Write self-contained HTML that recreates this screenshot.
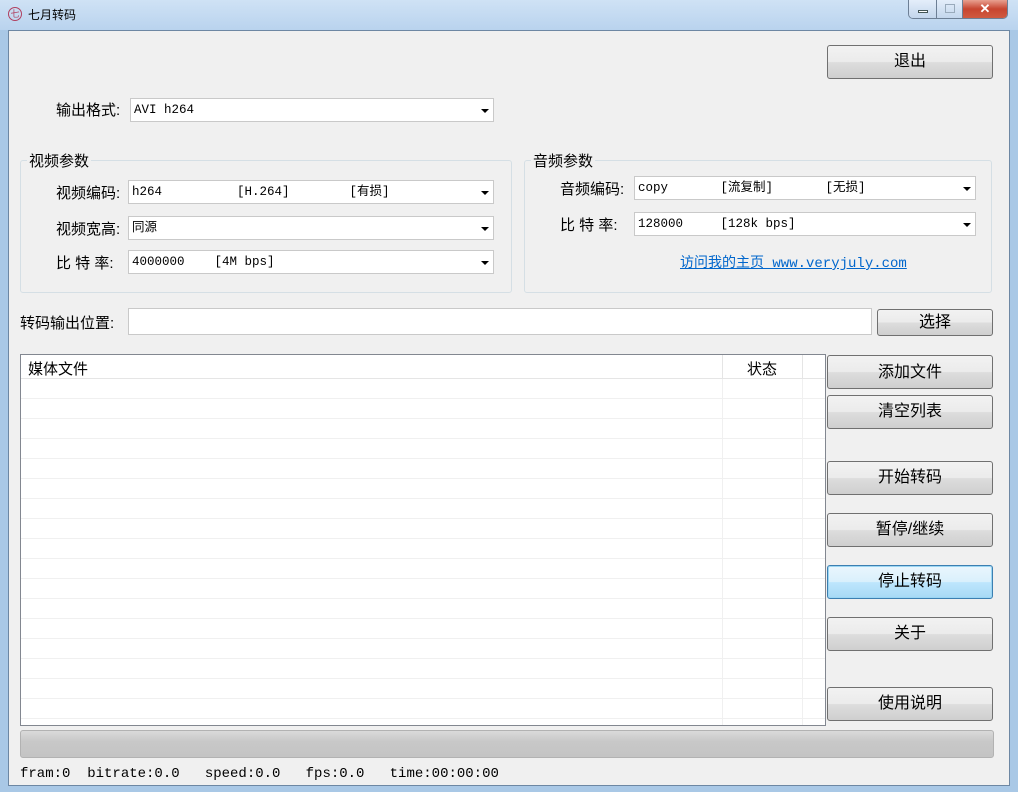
<!DOCTYPE html>
<html><head><meta charset="utf-8"><style>
*{margin:0;padding:0;box-sizing:border-box}
body{width:1018px;height:792px;overflow:hidden;background:#a9c8e6;font-family:"Liberation Sans","Noto Sans CJK SC",sans-serif;font-size:15px;color:#000;position:relative}
.abs{position:absolute}
#title{left:0;top:0;width:1018px;height:30px;background:linear-gradient(#cfe2f5,#b9d3ee)}
#client{left:8px;top:30px;width:1002px;height:756px;background:#f0f0f0;border:1px solid #6d87a3}
.lbl{position:absolute;font-size:15px;white-space:pre}
.cb{position:absolute;height:24px;background:#fff;border:1px solid #c9c9c9;font-family:"Liberation Mono","Noto Sans CJK SC",monospace;font-size:12.5px;line-height:22px;padding-left:3px;white-space:pre}
.cb:after{content:"";position:absolute;right:4px;top:10px;border-left:4px solid transparent;border-right:4px solid transparent;border-top:4px solid #000}
.btn{position:absolute;width:166px;border:1px solid #707070;border-radius:3px;background:linear-gradient(#f2f2f2 0%,#ebebeb 50%,#dddddd 51%,#cfcfcf 100%);text-align:center;font-size:16px}
.grp{position:absolute;border:1px solid #d5dfe5;border-radius:3px}
.gt{position:absolute;background:#f0f0f0;padding:0 2px;font-size:15px}
</style></head><body>
<div id="title" class="abs"></div>
<div class="abs" style="left:8px;top:7px;width:14px;height:14px;border:1px solid #b04060;border-radius:50%;font-size:9px;line-height:12px;text-align:center;color:#b04060">七</div>
<div class="abs" style="left:28px;top:6px;font-size:12px">七月转码</div>
<div class="abs" style="left:908px;top:0;width:100px;height:19px;border:1px solid #6d7f95;border-top:none;border-radius:0 0 5px 5px;overflow:hidden;display:flex">
<div style="width:28px;background:linear-gradient(#e4eefa,#c3d6ec);border-right:1px solid #6d7f95;position:relative"><div style="position:absolute;left:9px;top:10px;width:10px;height:3px;background:#fff;border:1px solid #455"></div></div>
<div style="width:26px;background:linear-gradient(#e4eefa,#c3d6ec);border-right:1px solid #6d7f95;position:relative"><div style="position:absolute;left:8px;top:4px;width:10px;height:9px;border:1px solid #9ab"></div></div>
<div style="flex:1;background:linear-gradient(#e8a090,#c74530 50%,#d05a40);color:#fff;font-weight:bold;text-align:center;font-size:13px;line-height:18px">✕</div>
</div>
<div id="client" class="abs"></div>

<div class="btn" style="left:827px;top:45px;height:34px;line-height:32px">退出</div>
<div class="lbl" style="left:56px;top:99px">输出格式:</div>
<div class="cb" style="left:130px;top:98px;width:364px">AVI h264</div>

<div class="grp" style="left:20px;top:160px;width:492px;height:133px"></div>
<div class="gt" style="left:27px;top:150px">视频参数</div>
<div class="lbl" style="left:56px;top:182px">视频编码:</div>
<div class="cb" style="left:128px;top:180px;width:366px">h264          [H.264]        [有损]</div>
<div class="lbl" style="left:56px;top:218px">视频宽高:</div>
<div class="cb" style="left:128px;top:216px;width:366px">同源</div>
<div class="lbl" style="left:56px;top:252px">比 特 率:</div>
<div class="cb" style="left:128px;top:250px;width:366px">4000000    [4M bps]</div>

<div class="grp" style="left:524px;top:160px;width:468px;height:133px"></div>
<div class="gt" style="left:531px;top:150px">音频参数</div>
<div class="lbl" style="left:560px;top:178px">音频编码:</div>
<div class="cb" style="left:634px;top:176px;width:342px">copy       [流复制]       [无损]</div>
<div class="lbl" style="left:560px;top:214px">比 特 率:</div>
<div class="cb" style="left:634px;top:212px;width:342px">128000     [128k bps]</div>
<div class="lbl" style="left:680px;top:252px;color:#0066cc;text-decoration:underline;font-family:'Liberation Mono','Noto Sans CJK SC',monospace;font-size:14px">访问我的主页 www.veryjuly.com</div>

<div class="lbl" style="left:20px;top:312px">转码输出位置:</div>
<div class="abs" style="left:128px;top:308px;width:744px;height:27px;background:#fff;border:1px solid #c9c9c9"></div>
<div class="btn" style="left:877px;top:309px;width:116px;height:27px;line-height:25px">选择</div>

<div class="abs" style="left:20px;top:354px;width:806px;height:372px;background:#fff;border:1px solid #828790;overflow:hidden">
<div class="abs" style="left:0;top:24px;right:0;bottom:0;background:repeating-linear-gradient(to bottom,transparent 0,transparent 19px,#f0f0f0 19px,#f0f0f0 20px)"></div>
<div class="abs" style="left:701px;top:0;width:1px;height:372px;background:#f0f0f0"></div>
<div class="abs" style="left:781px;top:0;width:1px;height:372px;background:#f0f0f0"></div>
<div class="abs" style="left:0;top:0;width:806px;height:24px;background:#fff;border-bottom:1px solid #e5e5e5"></div>
<div class="abs" style="left:701px;top:0;width:1px;height:24px;background:#e5e5e5"></div>
<div class="abs" style="left:781px;top:0;width:1px;height:24px;background:#e5e5e5"></div>
<div class="lbl" style="left:7px;top:3px">媒体文件</div>
<div class="lbl" style="left:726px;top:3px">状态</div>
</div>

<div class="btn" style="left:827px;top:355px;height:34px;line-height:34px">添加文件</div>
<div class="btn" style="left:827px;top:395px;height:34px;line-height:32px">清空列表</div>
<div class="btn" style="left:827px;top:461px;height:34px;line-height:32px">开始转码</div>
<div class="btn" style="left:827px;top:513px;height:34px;line-height:32px">暂停/继续</div>
<div class="btn" style="left:827px;top:565px;height:34px;line-height:32px;border-color:#3c7fb1;background:linear-gradient(#eaf6fd,#d9f0fc 50%,#bee6fd 51%,#a7d9f5);box-shadow:inset 0 0 0 1px #9bd6f3">停止转码</div>
<div class="btn" style="left:827px;top:617px;height:34px;line-height:32px">关于</div>
<div class="btn" style="left:827px;top:687px;height:34px;line-height:32px">使用说明</div>

<div class="abs" style="left:20px;top:730px;width:974px;height:28px;border:1px solid #b2b2b2;border-radius:3px;background:linear-gradient(#dadada,#c8c8c8 40%,#c4c4c4)"></div>
<div class="lbl" style="left:20px;top:766px;font-family:'Liberation Mono',monospace;font-size:14px">fram:0  bitrate:0.0   speed:0.0   fps:0.0   time:00:00:00</div>
</body></html>
